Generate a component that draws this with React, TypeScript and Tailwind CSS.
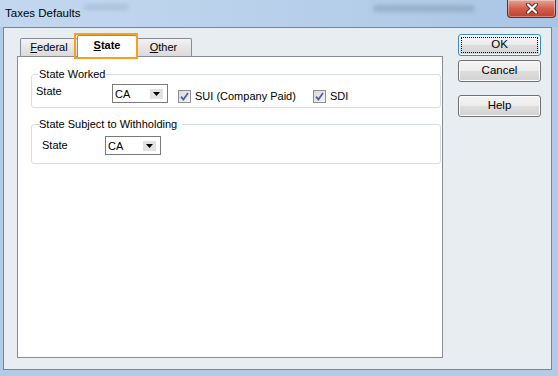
import React from 'react';

function TitleBar() {
  return (
    <div className="flex h-[27px] items-start bg-linear-to-r from-[#c3d8ef] via-[#b8d0ea] to-[#a9c5e6] pl-[5px] pr-[2px]">
      <span className="mt-[6px] text-[11.5px] leading-[14px] text-black">Taxes Defaults</span>
      <div className="ml-[4px] mt-[4px] h-[6px] w-[45px] rounded bg-[#9fb6cf] opacity-60 blur-[2px]" />
      <div className="flex-1" />
      <div className="mr-[32px] mt-[5px] h-[7px] w-[102px] rounded bg-[#7f94ad] opacity-50 blur-[2px]" />
      <div className="flex h-[18px] w-[49px] items-center justify-center rounded-b-[4px] border border-t-0 border-[#6e2a20] bg-linear-to-b from-[#e3a395] via-[#d25f4b] to-[#c0402c] shadow-[inset_0_0_0_1px_rgba(255,255,255,0.35)]">
        <svg width="14" height="11" viewBox="0 0 14 11">
          <path d="M3 1.5l8 8M11 1.5l-8 8" stroke="#5a2a24" strokeWidth="4" strokeLinecap="round" />
          <path d="M3 1.5l8 8M11 1.5l-8 8" stroke="#fff" strokeWidth="2.2" strokeLinecap="round" />
        </svg>
      </div>
    </div>
  );
}

function Tab({ label, rest, selected, className }: { label: string; rest: string; selected?: boolean; className: string }) {
  if (selected) {
    return (
      <div className={`relative z-10 -mb-px flex h-[22px] items-center justify-center rounded-t-[2px] border border-b-0 border-[#898c95] bg-white pb-[2px] font-bold ${className}`}>
        <span>
          <u className="underline-offset-[1px]">{label}</u>
          {rest}
        </span>
        <span className="absolute -top-[3px] -bottom-[2px] -left-[4px] -right-[2px] border-2 border-[#f8a01c]" />
      </div>
    );
  }
  return (
    <div className={`flex h-[18px] items-center justify-center rounded-t-[2px] border border-b-0 border-[#898c95] bg-linear-to-b from-[#f3f3f3] to-[#dadada] pb-[1px] ${className}`}>
      <span>
        <u className="underline-offset-[1px]">{label}</u>
        {rest}
      </span>
    </div>
  );
}

function Dropdown({ value }: { value: string }) {
  return (
    <div className="flex h-[19px] w-[56px] items-center border border-[#7a7a7a] bg-white">
      <span className="flex-1 pl-[2px] pt-[2px] leading-[13px]">{value}</span>
      <span className="mr-[4px] flex h-[10px] w-[13px] items-center justify-center bg-[#e2e2e2]">
        <svg width="7" height="4" viewBox="0 0 7 4">
          <path d="M0 0h7L3.5 4z" fill="#000" />
        </svg>
      </span>
    </div>
  );
}

function CheckBox({ label, className }: { label: string; className?: string }) {
  return (
    <label className={`flex items-center gap-[4px] ${className ?? ''}`}>
      <span className="flex h-[13px] w-[13px] items-center justify-center border border-[#8e8f8f] bg-linear-to-br from-[#d8d8d8] to-[#f7f7f7]">
        <svg width="9" height="9" viewBox="0 0 9 9">
          <path d="M1 4.6l2.4 2.9L8 1" fill="none" stroke="#4b5ca6" strokeWidth="1.7" />
        </svg>
      </span>
      <span className="pt-[1px] leading-[13px]">{label}</span>
    </label>
  );
}

function Button({ children, focused, className }: { children: React.ReactNode; focused?: boolean; className?: string }) {
  return (
    <button
      className={`relative h-[22px] w-[83px] rounded-[3px] border bg-[linear-gradient(#f4f4f4_0%,#ececec_50%,#dedede_50%,#d2d2d2_100%)] text-[11.5px] leading-none text-black shadow-[inset_0_0_0_1px_#fbfbfb] ${
        focused ? 'border-[#3a8dc4]' : 'border-[#707070]'
      } ${className ?? ''}`}
    >
      {children}
      {focused && <span className="absolute inset-[2px] rounded-[1px] border border-dotted border-black" />}
    </button>
  );
}

export default function App() {
  return (
    <div className="flex h-[376px] w-[558px] flex-col bg-[#b2cce8] font-['Liberation_Sans',Arial,sans-serif] text-[11px] text-black">
      <TitleBar />
      <div className="flex flex-1 pl-[3px] pr-[6px] pb-[6px]">
        <div className="flex flex-1 border border-[#74869a] bg-[#e8edf1] pl-[13px] pr-[10px] pb-[11px]">
          <div className="flex w-[426px] flex-col pt-[7px]">
            <div className="flex h-[21px] items-end pl-[3px]">
              <Tab label="F" rest="ederal" className="w-[58px]" />
              <Tab label="S" rest="tate" selected className="-ml-px w-[60px]" />
              <Tab label="O" rest="ther" className="-ml-[2px] w-[57px]" />
            </div>
            <div className="flex-1 border border-[#898c95] bg-white pl-[13px] pr-[1px] pt-[11px]">
              <fieldset className="rounded-[3px] border border-[#d5dfe5] pb-[4px] pl-[4px]">
                <legend className="ml-[2px] px-[1px] leading-[13px]">State Worked</legend>
                <div className="flex items-start pt-[3px]">
                  <span className="mt-[1px] w-[76px] leading-[13px]">State</span>
                  <Dropdown value="CA" />
                  <CheckBox label="SUI (Company Paid)" className="ml-[10px] mt-[5px] w-[135px]" />
                  <CheckBox label="SDI" className="mt-[5px]" />
                </div>
              </fieldset>
              <fieldset className="mt-[10px] rounded-[3px] border border-[#d5dfe5] pb-[8px] pl-[10px]">
                <legend className="ml-0 px-[1px] leading-[13px] -translate-x-[4px]">State Subject to Withholding</legend>
                <div className="flex items-center pt-[5px]">
                  <span className="w-[63px] leading-[13px]">State</span>
                  <Dropdown value="CA" />
                </div>
              </fieldset>
            </div>
          </div>
          <div className="ml-[15px] flex w-[83px] flex-col pt-[6px]">
            <Button focused>OK</Button>
            <Button className="mt-[4px]">Cancel</Button>
            <Button className="mt-[13px]">Help</Button>
          </div>
        </div>
      </div>
    </div>
  );
}
